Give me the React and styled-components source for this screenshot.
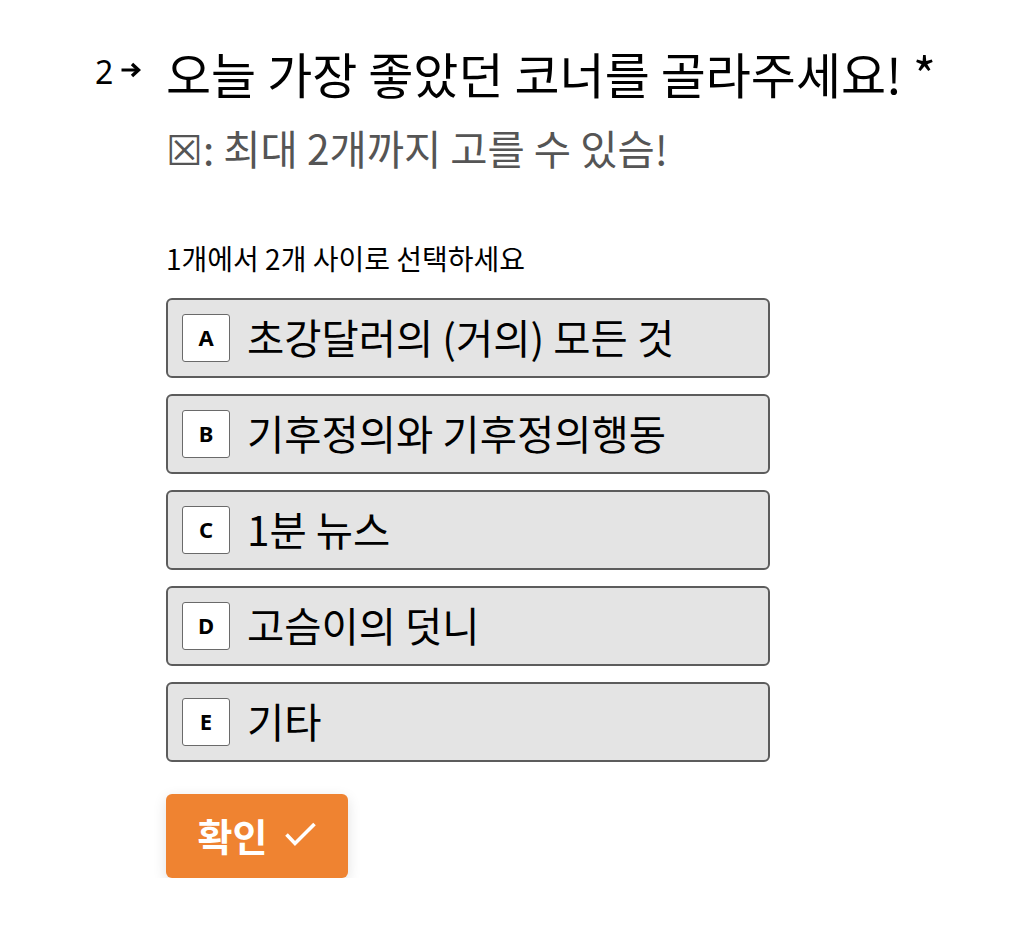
import React from "react";
import styled, { createGlobalStyle } from "styled-components";

const Global = createGlobalStyle`
  html, body { margin: 0; padding: 0; background: #ffffff; }
  body { font-family: "Noto Sans", "Noto Sans CJK KR", sans-serif; color: #000; }
`;

const Page = styled.div`
  padding: 36px 0 0 95px;
  width: 1010px;
  box-sizing: border-box;
`;

const Question = styled.div`
  display: grid;
  grid-template-columns: 71px 604px;
`;

const Number = styled.div`
  display: flex;
  align-items: center;
  gap: 7px;
  height: 74px;
  font-size: 32px;
  font-weight: 400;
  line-height: 1;
  padding-bottom: 2px;
  box-sizing: border-box;
`;

const Arrow = styled.svg`
  width: 22px;
  height: 16px;
  margin-top: -4px;
`;

const Body = styled.div`
  display: flex;
  flex-direction: column;
`;

const Title = styled.h1`
  margin: 0;
  font-weight: 400;
  font-size: 49px;
  line-height: 74px;
  white-space: nowrap;
  font-family: "Noto Sans CJK KR", "Noto Sans", sans-serif;
`;

const Subtitle = styled.p`
  margin: 8px 0 0;
  font-size: 40.5px;
  line-height: 60px;
  color: #555555;
  white-space: nowrap;
  font-family: "Noto Sans CJK KR", "Noto Sans", sans-serif;
`;

const Box = styled.span`
  font-family: "DejaVu Sans", sans-serif;
  font-weight: 300;
`;

const Hint = styled.div`
  margin-top: 60px;
  font-size: 28px;
  line-height: 34px;
  font-family: "Noto Sans CJK KR", "Noto Sans", sans-serif;
`;

const Options = styled.div`
  margin-top: 23px;
  display: flex;
  flex-direction: column;
  gap: 16px;
`;

const Option = styled.div`
  box-sizing: border-box;
  width: 604px;
  height: 80px;
  border: 2px solid #5c5c5c;
  border-radius: 6px;
  background: #e4e4e4;
  display: flex;
  align-items: center;
  padding-left: 14px;
  gap: 17px;
`;

const Key = styled.span`
  box-sizing: border-box;
  width: 48px;
  height: 48px;
  border: 1.5px solid #6a6a6a;
  border-radius: 3px;
  background: #ffffff;
  display: flex;
  align-items: center;
  justify-content: center;
  font-size: 22px;
  font-weight: 700;
  font-family: "Noto Sans", sans-serif;
  padding-bottom: 3px;
`;

const Label = styled.span`
  font-size: 40.5px;
  line-height: 1;
  white-space: nowrap;
  font-family: "Noto Sans CJK KR", "Noto Sans", sans-serif;
  padding-bottom: 2px;
`;

const Submit = styled.button`
  margin-top: 32px;
  align-self: flex-start;
  width: 182px;
  height: 84px;
  border: none;
  border-radius: 6px;
  background: #ef8331;
  color: #ffffff;
  box-shadow: 0 4px 14px rgba(0, 0, 0, 0.12);
  display: flex;
  align-items: center;
  justify-content: center;
  gap: 18px;
  font-family: "Noto Sans CJK KR", "Noto Sans", sans-serif;
  font-size: 38px;
  font-weight: 700;
  padding: 0 0 4px 0;
  cursor: pointer;
`;

const Check = styled.svg`
  width: 31px;
  height: 26px;
`;

const options = [
  ["A", "초강달러의 (거의) 모든 것"],
  ["B", "기후정의와 기후정의행동"],
  ["C", "1분 뉴스"],
  ["D", "고슴이의 덧니"],
  ["E", "기타"],
];

export default function App() {
  return (
    <>
      <Global />
      <Page>
        <Question>
          <Number>
            2
            <Arrow viewBox="0 0 22 16">
              <path d="M1.5 8h16" fill="none" stroke="#000" strokeWidth="3" />
              <path d="M12 2l6.5 6-6.5 6" fill="none" stroke="#000" strokeWidth="3.4" strokeLinejoin="miter" />
            </Arrow>
          </Number>
          <Body>
            <Title>오늘 가장 좋았던 코너를 골라주세요! *</Title>
            <Subtitle><Box>☒</Box>: 최대 2개까지 고를 수 있슴!</Subtitle>
            <Hint>1개에서 2개 사이로 선택하세요</Hint>
            <Options>
              {options.map(([k, t]) => (
                <Option key={k}>
                  <Key>{k}</Key>
                  <Label>{t}</Label>
                </Option>
              ))}
            </Options>
            <Submit>
              확인
              <Check viewBox="0 0 31 26">
                <path d="M1.5 13.5l8.5 9L29.5 3" fill="none" stroke="#fff" strokeWidth="3.6" />
              </Check>
            </Submit>
          </Body>
        </Question>
      </Page>
    </>
  );
}
